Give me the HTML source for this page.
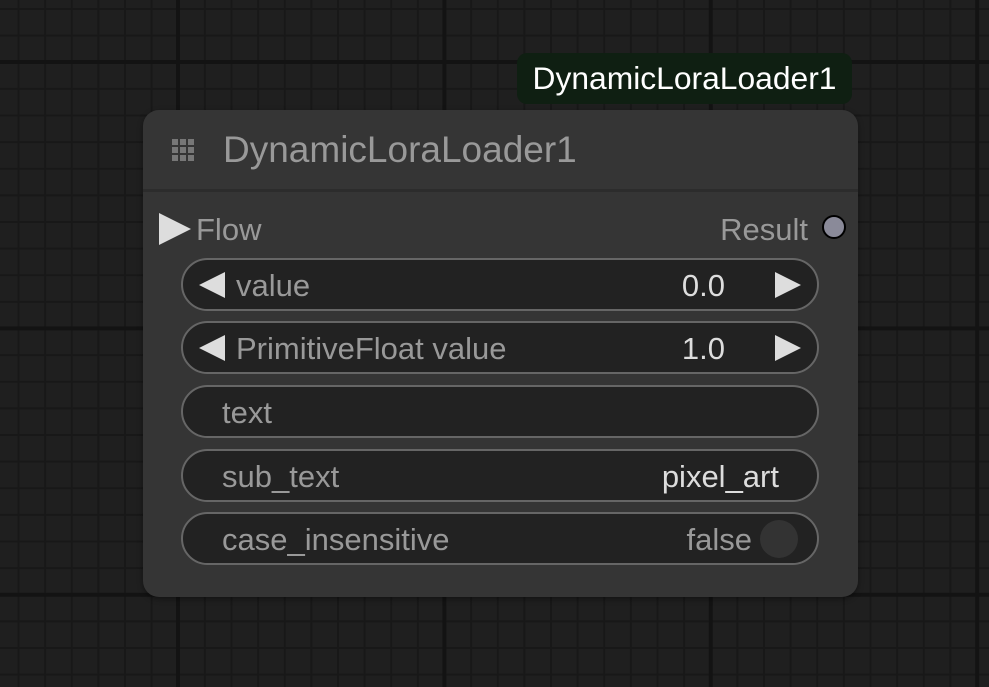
<!DOCTYPE html>
<html><head><style>
html,body{margin:0;padding:0;}
body{width:989px;height:687px;overflow:hidden;position:relative;font-family:"Liberation Sans",sans-serif;
background-color:#1f1f1f;
background-image:
linear-gradient(90deg,#131313 4px,transparent 4px),
linear-gradient(180deg,#131313 4px,transparent 4px),
linear-gradient(90deg,#181818 2px,transparent 2px),
linear-gradient(180deg,#181818 2px,transparent 2px);
background-size:266.4px 266.4px,266.4px 266.4px,26.64px 26.64px,26.64px 26.64px;
background-position:176px 0,0 60px,17.5px 0,0 8px;}
.tip{position:absolute;left:517px;top:53px;width:335px;height:51px;background:#0f1f12;border-radius:10px;color:#fff;font-size:31.8px;line-height:51px;text-align:center;}
.node{position:absolute;left:143px;top:110px;width:715px;height:487px;background:#353535;border-radius:16px;box-shadow:0 2px 6px rgba(0,0,0,.4);}
.hdr{height:79px;border-bottom:3px solid #2c2c2c;position:relative;}
.title{position:absolute;left:80px;top:19px;font-size:37px;color:#999;}
.dots{position:absolute;left:29px;top:29px;width:22px;height:22px;}
.dots i{position:absolute;width:6px;height:6px;background:#777;}
.w{position:absolute;left:38px;width:634px;height:49px;border:2px solid #666;border-radius:27px;background:#222;color:#999;font-size:31px;line-height:51px;}
.w .l{position:absolute;left:53px;}
.w .v{position:absolute;right:92px;color:#ddd;}
.al{position:absolute;left:16px;top:12px;width:0;height:0;border-top:13px solid transparent;border-bottom:13px solid transparent;border-right:26px solid #ddd;}
.ar{position:absolute;right:16px;top:12px;width:0;height:0;border-top:13px solid transparent;border-bottom:13px solid transparent;border-left:26px solid #ddd;}
</style></head><body>
<div class="tip">DynamicLoraLoader1</div>
<div class="node">
 <div class="hdr">
  <div class="dots"><i style="left:0;top:0"></i><i style="left:8px;top:0"></i><i style="left:16px;top:0"></i><i style="left:0;top:8px"></i><i style="left:8px;top:8px"></i><i style="left:16px;top:8px"></i><i style="left:0;top:16px"></i><i style="left:8px;top:16px"></i><i style="left:16px;top:16px"></i></div>
  <div class="title">DynamicLoraLoader1</div>
 </div>
 <div style="position:absolute;left:16px;top:103px;width:0;height:0;border-top:16px solid transparent;border-bottom:16px solid transparent;border-left:32px solid #ddd;"></div>
 <div style="position:absolute;left:53px;top:102px;font-size:31px;color:#999;">Flow</div>
 <div style="position:absolute;right:50px;top:102px;font-size:31px;color:#999;">Result</div>
 <div style="position:absolute;left:679px;top:105px;width:20px;height:20px;border-radius:50%;background:#8a8a99;border:2px solid #000;"></div>
 <div class="w" style="top:148px"><div class="al"></div><span class="l" style="left:53px">value</span><span class="v">0.0</span><div class="ar"></div></div>
 <div class="w" style="top:211px"><div class="al"></div><span class="l" style="left:53px">PrimitiveFloat value</span><span class="v">1.0</span><div class="ar"></div></div>
 <div class="w" style="top:275px"><span class="l" style="left:39px">text</span></div>
 <div class="w" style="top:339px"><span class="l" style="left:39px">sub_text</span><span class="v" style="right:38px">pixel_art</span></div>
 <div class="w" style="top:402px"><span class="l" style="left:39px">case_insensitive</span><span class="v" style="right:65px;color:#999">false</span><div style="position:absolute;right:19px;top:6px;width:38px;height:38px;border-radius:50%;background:#333;"></div></div>
</div>
</body></html>
